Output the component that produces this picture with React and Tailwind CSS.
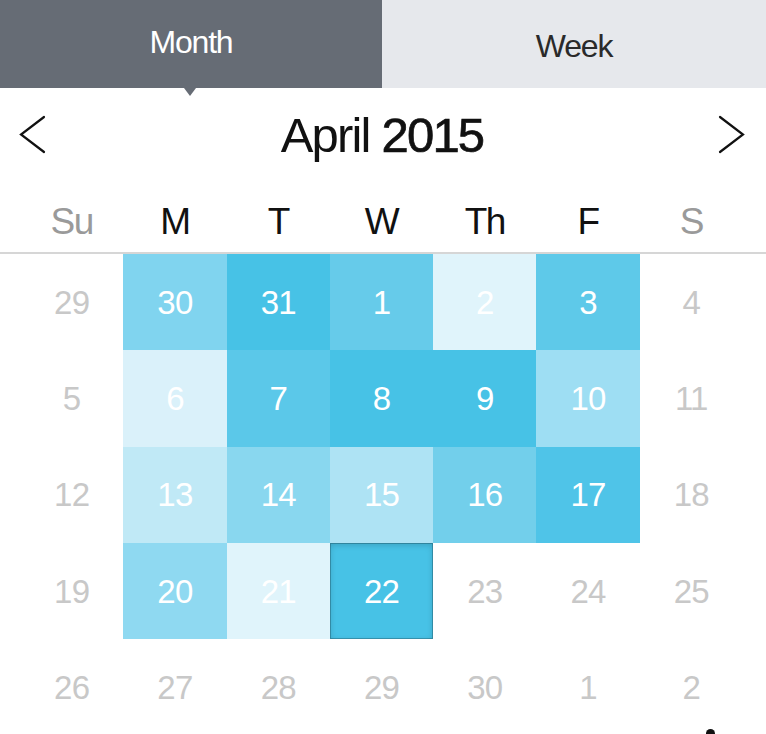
import React from 'react';

const FONT = { fontFamily: '"Liberation Sans", Arial, sans-serif' };

const labels = [
    { t: 'Su', muted: true },
    { t: 'M' },
    { t: 'T' },
    { t: 'W' },
    { t: 'Th' },
    { t: 'F' },
    { t: 'S', muted: true },
];

// each cell: [label, background class or null, selected]
const weeks = [
    [['29'], ['30', 'bg-[#80d4ef]'], ['31', 'bg-[#47c2e6]'], ['1', 'bg-[#66cbea]'], ['2', 'bg-[#e0f4fb]'], ['3', 'bg-[#5ec9e9]'], ['4']],
    [['5'], ['6', 'bg-[#daf1fa]'], ['7', 'bg-[#5bc8e9]'], ['8', 'bg-[#47c2e6]'], ['9', 'bg-[#47c2e6]'], ['10', 'bg-[#9edef3]'], ['11']],
    [['12'], ['13', 'bg-[#c0e9f6]'], ['14', 'bg-[#89d7ef]'], ['15', 'bg-[#aee3f4]'], ['16', 'bg-[#72cfeb]'], ['17', 'bg-[#4fc4e8]'], ['18']],
    [['19'], ['20', 'bg-[#8fd9f1]'], ['21', 'bg-[#e0f4fb]'], ['22', 'bg-[#47c2e6]', true], ['23'], ['24'], ['25']],
    [['26'], ['27'], ['28'], ['29'], ['30'], ['1'], ['2']],
];

function Chevron({ dir }) {
    return (
        <svg width="30" height="40" viewBox="0 0 30 40" fill="none">
            <path
                d={dir === 'left' ? 'M26 2 L3 19.5 L26 37' : 'M4 2 L27 19.5 L4 37'}
                stroke="#111"
                strokeWidth="2.2"
                strokeLinecap="round"
            />
        </svg>
    );
}

function DayCell({ label, bg, selected }) {
    return (
        <div
            className={`flex items-center justify-center text-[33px] leading-none tracking-[-0.8px] ${
                bg ? `${bg} text-white` : 'text-[#c8c8c8]'
            } ${selected ? 'shadow-[inset_0_0_0_1px_rgba(0,0,0,0.22),inset_0_2px_6px_rgba(0,0,0,0.18)]' : ''}`}
        >
            {label}
        </div>
    );
}

export default function App() {
    return (
        <div className="w-[766px] h-[734px] bg-white overflow-hidden relative" style={FONT}>
            {/* tabs */}
            <div className="flex h-[88px]">
                <div className="relative w-[382px] bg-[#666c75] flex justify-center pt-[26px]">
                    <span className="text-white text-[32px] leading-none tracking-[-1.2px]">Month</span>
                    <div className="absolute left-[184px] top-[88px] w-0 h-0 border-l-[6px] border-r-[6px] border-t-[8px] border-l-transparent border-r-transparent border-t-[#666c75]" />
                </div>
                <div className="flex-1 bg-[#e6e8ec] flex justify-center pt-[30px]">
                    <span className="text-[#2a2a2a] text-[32px] leading-none tracking-[-1.2px]">Week</span>
                </div>
            </div>

            {/* month header */}
            <div className="flex items-center justify-between pl-[18px] pr-[20px] h-[94px]">
                <Chevron dir="left" />
                <div className="text-[49px] leading-none tracking-[-1.8px] text-[#111]">
                    April <span className="[-webkit-text-stroke:0.7px_#111]">2015</span>
                </div>
                <Chevron dir="right" />
            </div>

            {/* weekday labels */}
            <div className="grid grid-cols-7 pl-[20px] pr-[23px] h-[72px] items-center pt-[8px] border-b-2 border-[#d6d6d6]">
                {labels.map((l) => (
                    <div
                        key={l.t}
                        className={`text-center text-[37px] leading-none tracking-[-1.5px] ${
                            l.muted ? 'text-[#9a9a9a]' : 'text-[#111]'
                        }`}
                    >
                        {l.t}
                    </div>
                ))}
            </div>

            {/* days */}
            <div className="grid grid-cols-7 grid-rows-[repeat(5,96.3px)] pl-[20px] pr-[23px]">
                {weeks.flatMap((w, wi) =>
                    w.map(([label, bg, selected], di) => (
                        <DayCell key={`${wi}-${di}`} label={label} bg={bg} selected={selected} />
                    ))
                )}
            </div>

            <div className="absolute left-[706px] top-[729px] w-[9px] h-[9px] rounded-full bg-[#111]" />
        </div>
    );
}
